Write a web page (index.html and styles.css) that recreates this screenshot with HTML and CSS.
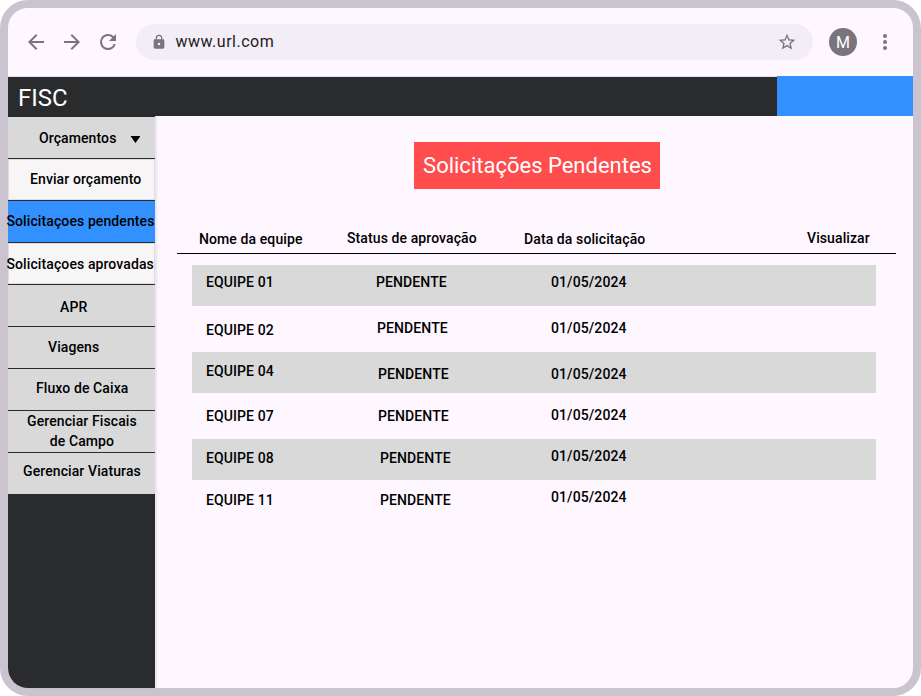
FILE: index.html
```html
<!DOCTYPE html>
<html lang="pt-BR">
<head>
<meta charset="utf-8">
<title>FISC</title>
<link rel="stylesheet" href="styles.css">
</head>
<body>
<div class="window">
  <div class="toolbar">
    <svg class="icon" viewBox="0 0 24 24"><path d="M20 11H7.83l5.59-5.59L12 4l-8 8 8 8 1.41-1.41L7.83 13H20v-2z"/></svg>
    <svg class="icon" viewBox="0 0 24 24"><path d="M12 4l-1.41 1.41L16.17 11H4v2h12.17l-5.58 5.59L12 20l8-8z"/></svg>
    <svg class="icon" viewBox="0 0 24 24"><path d="M17.65 6.35A7.958 7.958 0 0 0 12 4a8 8 0 1 0 7.73 10h-2.08A6 6 0 1 1 12 6c1.66 0 3.14.69 4.22 1.78L13 11h7V4l-2.35 2.35z"/></svg>
    <div class="address">
      <svg class="lock" viewBox="0 0 24 24"><path d="M18 8h-1V6A5 5 0 0 0 7 6v2H6a2 2 0 0 0-2 2v10c0 1.100.9 2 2 2h12a2 2 0 0 0 2-2V10a2 2 0 0 0-2-2zm-6 9a2 2 0 1 1 0-4 2 2 0 0 1 0 4zM15.100 8H8.900V6a3.100 3.100 0 0 1 6.200 0v2z"/></svg>
      <span class="url">www.url.com</span>
      <svg class="star" viewBox="0 0 24 24"><path d="M22 9.240l-7.190-.62L12 2 9.190 8.630 2 9.240l5.460 4.730L5.820 21 12 17.270 18.180 21l-1.630-7.030L22 9.240zM12 15.400l-3.760 2.270 1-4.280-3.320-2.880 4.380-.38L12 6.100l1.710 4.040 4.380.38-3.320 2.880 1 4.280L12 15.400z"/></svg>
    </div>
    <div class="avatar">M</div>
    <svg class="more" viewBox="0 0 24 24"><circle cx="12" cy="6" r="2"/><circle cx="12" cy="12" r="2"/><circle cx="12" cy="18" r="2"/></svg>
  </div>
  <div class="header"><span class="brand">FISC</span><div class="account"></div></div>
  <div class="body">
    <nav class="sidebar">
      <div class="item orcamentos">Orçamentos<i class="caret"></i></div>
      <div class="item sub enviar">Enviar orçamento</div>
      <div class="item active pendentes">Solicitaçoes pendentes</div>
      <div class="item sub aprovadas">Solicitaçoes aprovadas</div>
      <div class="item apr">APR</div>
      <div class="item viagens">Viagens</div>
      <div class="item fluxo">Fluxo de Caixa</div>
      <div class="item fiscais"><span>Gerenciar Fiscais<br>de Campo</span></div>
      <div class="item viaturas">Gerenciar Viaturas</div>
    </nav>
    <main class="content">
      <h1>Solicitações Pendentes</h1>
      <div class="columns"><span class="low">Nome da equipe</span><span>Status de aprovação</span><span class="low">Data da solicitação</span><span>Visualizar</span></div>
      <div class="rows">
        <div class="row r1"><span>EQUIPE 01</span><span>PENDENTE</span><span>01/05/2024</span></div>
        <div class="row r2"><span>EQUIPE 02</span><span>PENDENTE</span><span>01/05/2024</span></div>
        <div class="row r3"><span>EQUIPE 04</span><span>PENDENTE</span><span>01/05/2024</span></div>
        <div class="row r4"><span>EQUIPE 07</span><span>PENDENTE</span><span>01/05/2024</span></div>
        <div class="row r5"><span>EQUIPE 08</span><span>PENDENTE</span><span>01/05/2024</span></div>
        <div class="row r6"><span>EQUIPE 11</span><span>PENDENTE</span><span>01/05/2024</span></div>
      </div>
    </main>
  </div>
</div>
</body>
</html>
```
FILE: styles.css
```css
* { box-sizing: border-box; }
body { margin: 0; background: #fff; font: 500 14px/20px Roboto, sans-serif; letter-spacing: .1px; color: #000; }
.window { height: 696px; border: 8px solid #cac4d0; border-radius: 28px; background: #fef7ff; display: flex; flex-direction: column; }
.toolbar { height: 68px; flex: none; display: flex; align-items: center; padding-left: 16px; }
svg { fill: #79747e; flex: none; display: block; }
.icon { width: 24px; height: 24px; margin-right: 12px; }
.address { width: 677px; height: 36px; margin-left: 4px; border-radius: 18px; background: #f3edf7; display: flex; align-items: center; padding: 0 18px 0 15px; }
.lock { width: 16px; height: 16px; }
.url { font-size: 16px; font-weight: 400; letter-spacing: .5px; color: #1d1b20; margin-left: 8.5px; flex: 1; }
.star { width: 20px; height: 20px; margin-right: -2px; }
.avatar { width: 28px; height: 28px; margin-left: 16px; border-radius: 50%; background: #79747e; color: #fff; font-size: 16px; font-weight: 400; line-height: 29px; text-align: center; }
.more { width: 24px; height: 24px; margin-left: 16px; }
.header { height: 40px; flex: none; background: #2a2b2d; border-top: 1px solid #e7e0ec; display: flex; justify-content: space-between; }
.brand { font-size: 24px; font-weight: 400; line-height: 32px; letter-spacing: 0; color: #fff; padding: 5px 0 0 10px; }
.account { width: 136px; height: 40px; margin-top: -1px; background: #3291ff; }
.body { flex: 1; display: flex; min-height: 0; }
.sidebar { width: 147px; flex: none; background: #2a2b2d; border-bottom-left-radius: 20px; padding-top: 1px; box-shadow: 2px 0 2px rgba(0,0,0,.08); }
.item { height: 42px; border-bottom: 1px solid #2a2b2d; background: #d9d9d9; white-space: nowrap; }
.sub { background: #f7f5f6; box-shadow: inset 0 0 0 1px #dbe0dc; }
.active { background: #3291ff; }
.orcamentos { padding: 11px 0 0 31px; display: flex; }
.caret { width: 10px; height: 7px; margin: 8px 0 0 14px; background: #000; clip-path: polygon(0 0, 100% 0, 50% 100%); }
.enviar { padding: 10px 0 0 22px; }
.pendentes { padding-top: 10px; text-indent: -1.5px; }
.aprovadas { padding-top: 11px; text-indent: -1.5px; }
.apr { padding: 12px 0 0 52px; }
.viagens { padding: 10px 0 0 40px; }
.fluxo { padding: 9px 0 0 28px; }
.fiscais { padding-left: 19px; }
.fiscais span { display: inline-block; text-align: center; }
.viaturas { padding: 8px 0 0 15px; }
.content { flex: 1; padding: 26px 17px 0 22px; }
h1 { width: 246px; height: 47px; margin: 0 0 0 237px; padding-left: 1px; background: #ff4c4c; color: #fff; font-size: 22px; font-weight: 400; line-height: 47px; letter-spacing: 0; text-align: center; }
.columns { height: 65px; border-bottom: 1px solid #000; padding: 39px 0 0 22px; display: grid; grid-template-columns: 148px 177px 283px auto; }
.columns .low { padding-top: 1px; }
.rows { margin: 11px 20px 0 15px; }
.row { height: 46px; padding-left: 14px; display: grid; grid-template-columns: 170px 175px auto; }
.row:nth-child(odd) { height: 41px; background: #d9d9d9; }
.r1 span { padding-top: 7px; }
.r2 span { padding-top: 12px; }
.r2 span:first-child { padding-top: 14px; }
.r2 span:nth-child(2) { padding-left: 1px; }
.r3 span { padding-top: 12px; }
.r3 span:first-child { padding-top: 9px; }
.r3 span:nth-child(2), .r4 span:nth-child(2) { padding-left: 2px; }
.r4 span { padding-top: 13px; }
.r4 span:last-child { padding-top: 12px; }
.r5 span { padding-top: 9px; }
.r6 span { padding-top: 10px; }
.r5 span:nth-child(2), .r6 span:nth-child(2) { padding-left: 4px; }
.r5 span:last-child, .r6 span:last-child { padding-top: 7px; }
```
